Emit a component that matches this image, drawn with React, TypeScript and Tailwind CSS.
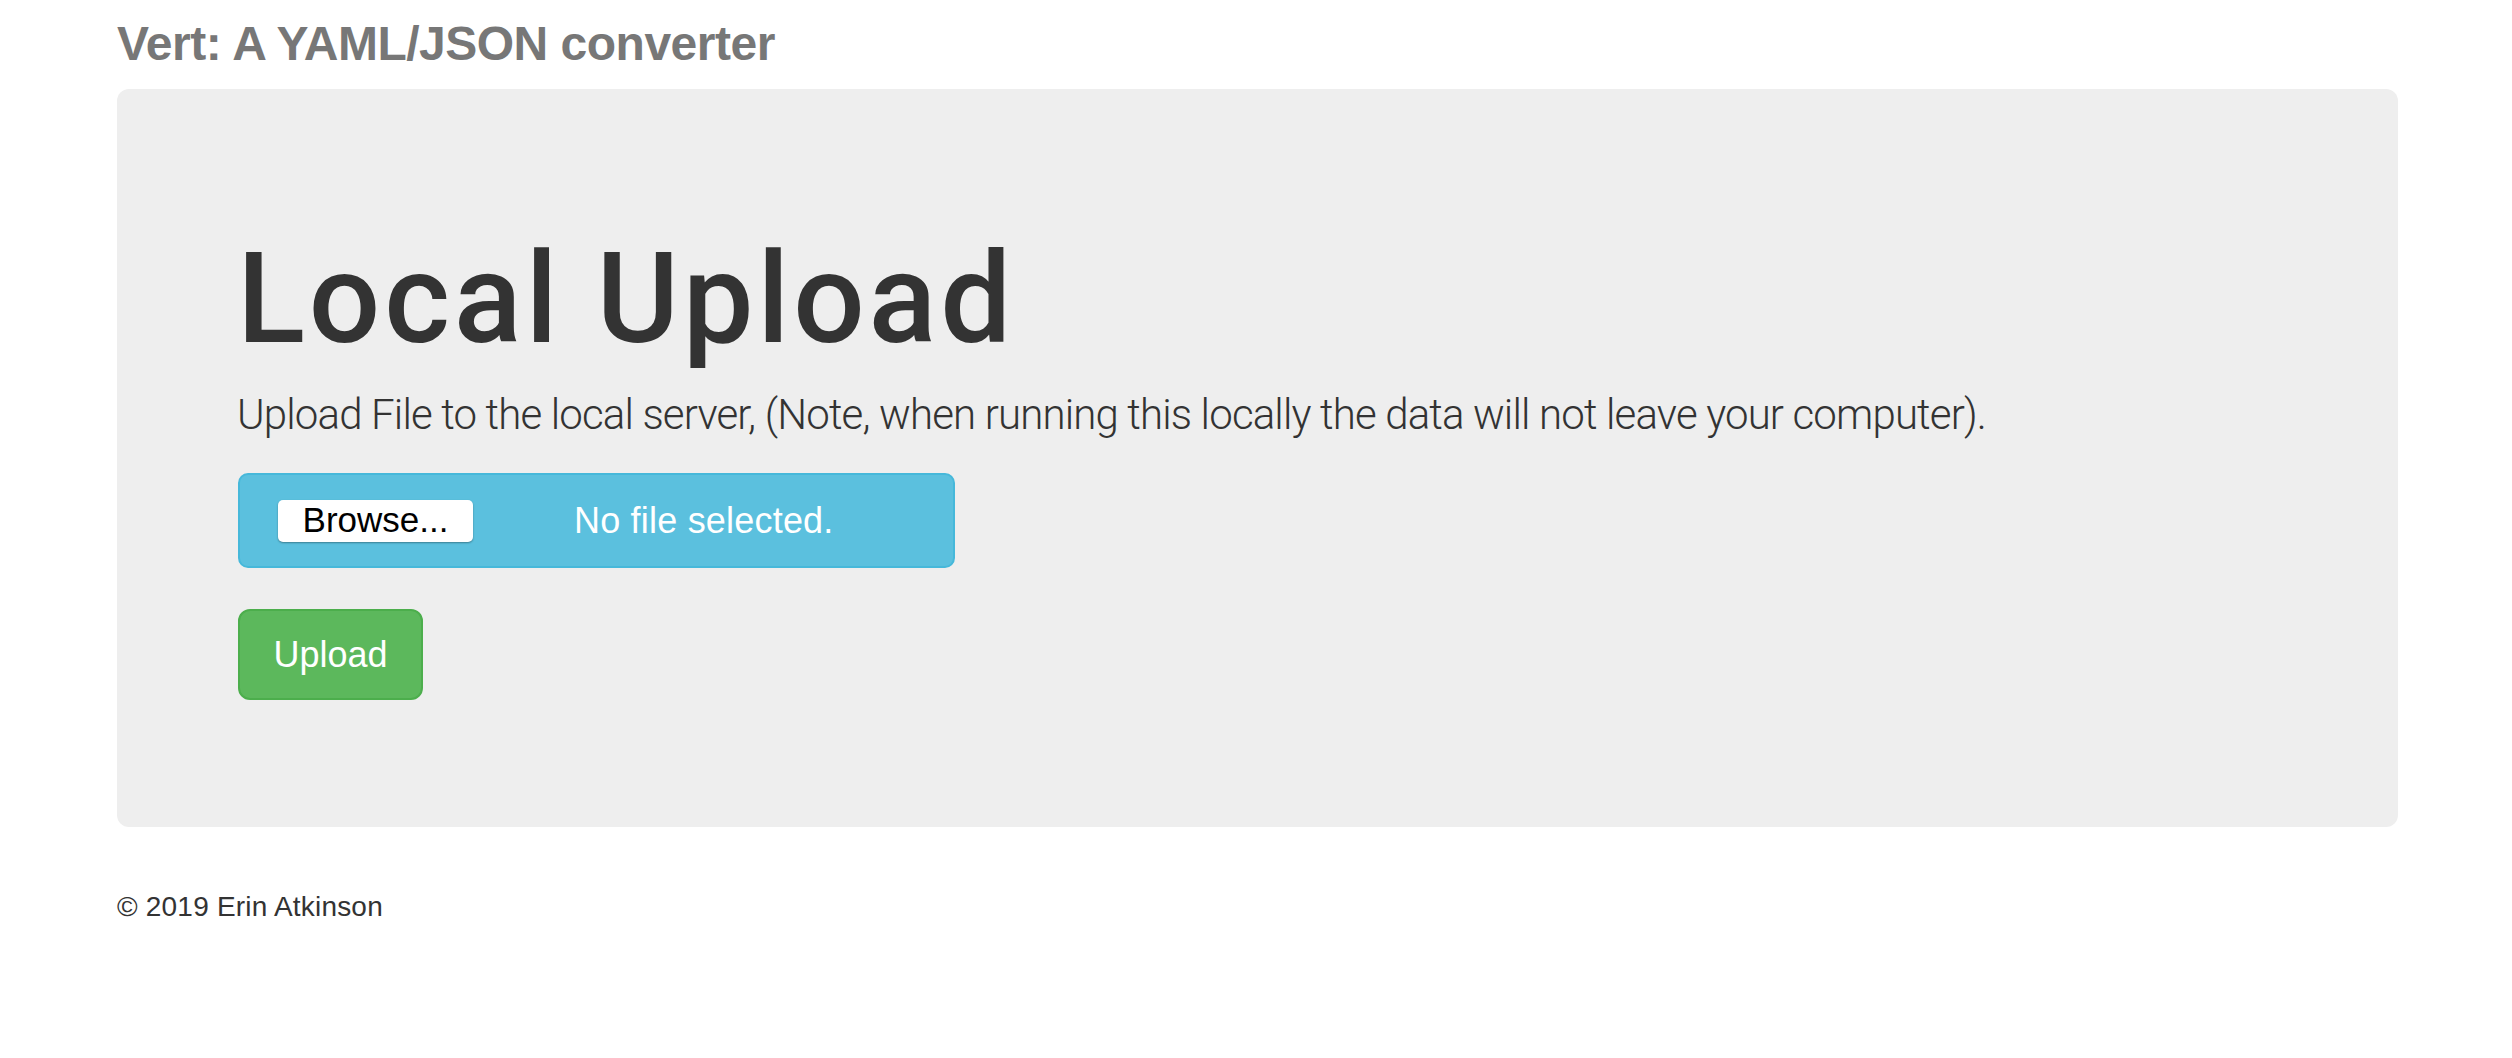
export default function App() {
  return (
    <div className="min-h-[1058px] bg-white pl-[117px] pr-[114px] font-['Liberation_Sans',Arial,sans-serif]">
      <h3 className="pt-[20px] text-[48px] leading-[48px] font-bold tracking-[-0.5px] text-[#777]">
        Vert: A YAML/JSON converter
      </h3>

      <div className="mt-[21px] rounded-[12px] bg-[#eee] pt-[147px] pb-[127px] pl-[120px] pr-[120px]">
        <h1 className="font-['Roboto',sans-serif] text-[126px] leading-[126px] font-medium tracking-[3.8px] text-[#333]">
          Local Upload
        </h1>
        <p className="mt-[32px] font-['Roboto',sans-serif] text-[42px] leading-[42px] font-light tracking-[-0.85px] text-[#333]">
          Upload File to the local server, (Note, when running this locally the data will not leave your
          computer).
        </p>

        <div className="mt-[37px] ml-px flex h-[95px] w-[717px] items-center rounded-[10px] border-2 border-[#46b8da] bg-[#5bc0de] pl-[38px]">
          <span className="flex h-[42px] w-[195px] items-center justify-center rounded-[5px] bg-white text-[35px] text-black shadow-[0_1px_2px_rgba(0,0,0,0.35)]">
            Browse...
          </span>
          <span className="ml-[101px] text-[36px] tracking-[0.2px] text-white">No file selected.</span>
        </div>

        <button className="mt-[41px] ml-px flex h-[91px] w-[185px] items-center justify-center rounded-[12px] border-2 border-[#4cae4c] bg-[#5cb85c] text-[36px] text-white">
          Upload
        </button>
      </div>

      <footer className="mt-[66px] text-[28px] leading-[28px] tracking-[0.2px] text-[#333]">© 2019 Erin Atkinson</footer>
    </div>
  );
}
